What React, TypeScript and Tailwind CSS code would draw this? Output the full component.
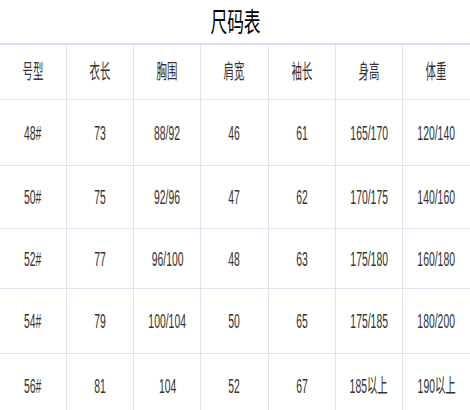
import React from "react";

const headers = ["号型", "衣长", "胸围", "肩宽", "袖长", "身高", "体重"];

const rows: { h: string; cells: string[] }[] = [
  { h: "h-[66px]", cells: ["48#", "73", "88/92", "46", "61", "165/170", "120/140"] },
  { h: "h-[63px]", cells: ["50#", "75", "92/96", "47", "62", "170/175", "140/160"] },
  { h: "h-[60px]", cells: ["52#", "77", "96/100", "48", "63", "175/180", "160/180"] },
  { h: "h-[65px]", cells: ["54#", "79", "100/104", "50", "65", "175/185", "180/200"] },
  { h: "h-[64px]", cells: ["56#", "81", "104", "52", "67", "185以上", "190以上"] },
];

const font = { fontFamily: '"Liberation Sans", "Noto Sans CJK SC", sans-serif' };

function Cell({ text, last }: { text: string; last: boolean }) {
  return (
    <div
      className={
        "flex items-center justify-center border-[#dfe4f2] " + (last ? "" : "border-r")
      }
    >
      <span className="inline-block scale-x-[0.52] text-[20px] leading-none text-[#333] whitespace-nowrap">
        {text}
      </span>
    </div>
  );
}

export default function App() {
  return (
    <div className="w-[470px] h-[410px] overflow-hidden bg-white" style={font}>
      <div className="h-[43px] flex items-center justify-center">
        <h1 className="inline-block scale-x-[0.62] text-[27px] text-black leading-none pt-1">
          尺码表
        </h1>
      </div>
      <div className="border-t-2 border-[#d8def0]">
        <div className="grid grid-cols-7 h-[55px] border-b border-[#dfe4f2]">
          {headers.map((t, i) => (
            <Cell key={t} text={t} last={i === 6} />
          ))}
        </div>
        {rows.map((r, ri) => (
          <div key={ri} className={"grid grid-cols-7 border-b border-[#dfe4f2] " + r.h}>
            {r.cells.map((t, i) => (
              <Cell key={i} text={t} last={i === 6} />
            ))}
          </div>
        ))}
      </div>
    </div>
  );
}
